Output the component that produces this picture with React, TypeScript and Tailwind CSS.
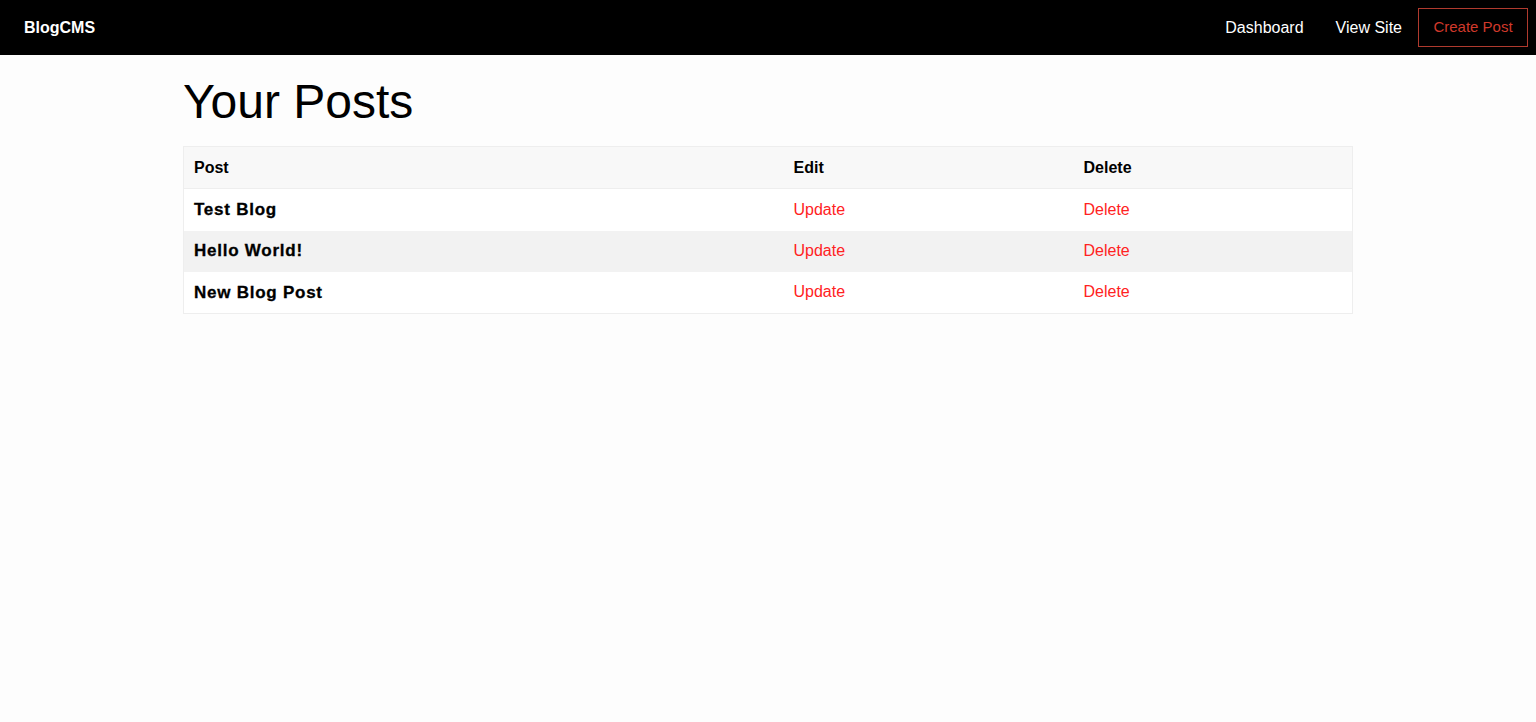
import React from "react";

const posts = ["Test Blog", "Hello World!", "New Blog Post"];

export default function App() {
  return (
    <div className="min-h-[722px] bg-[#fdfdfd] font-['Liberation_Sans',Arial,sans-serif] text-black">
      <nav className="flex h-[55px] items-center justify-between bg-black pl-6 pr-2">
        <span className="text-[16px] font-bold text-white">BlogCMS</span>
        <div className="flex items-center">
          <a className="px-4 text-[16px] text-white">Dashboard</a>
          <a className="px-4 text-[16px] text-white">View Site</a>
          <a className="flex h-[39px] w-[110px] items-center justify-center border border-[#b03a2e] text-[15px] text-[#d0392b]">
            Create Post
          </a>
        </div>
      </nav>
      <main className="mx-auto w-[1170px]">
        <h1 className="mt-[19px] mb-[16px] text-[48px] leading-[56px]">Your Posts</h1>
        <table className="w-full border-collapse border border-[#eeeeee]">
          <thead>
            <tr className="h-[42px] bg-[#f8f8f8] text-left text-[16px] font-bold">
              <th className="w-[600px] border-b border-[#eeeeee] pl-[10px]">Post</th>
              <th className="w-[290px] border-b border-[#eeeeee] pl-[10px]">Edit</th>
              <th className="border-b border-[#eeeeee] pl-[10px]">Delete</th>
            </tr>
          </thead>
          <tbody>
            {posts.map((p, i) => (
              <tr key={p} className={`${i === 1 ? "h-[41px] bg-[#f2f2f2]" : "h-[42px] bg-white"}`}>
                <td className="pl-[10px] text-[17px] font-bold tracking-[0.75px] [-webkit-text-stroke:0.3px_black]">{p}</td>
                <td className="pl-[10px] text-[16px] text-[#ff2222]">Update</td>
                <td className="pl-[10px] text-[16px] text-[#ff2222]">Delete</td>
              </tr>
            ))}
          </tbody>
        </table>
      </main>
    </div>
  );
}
